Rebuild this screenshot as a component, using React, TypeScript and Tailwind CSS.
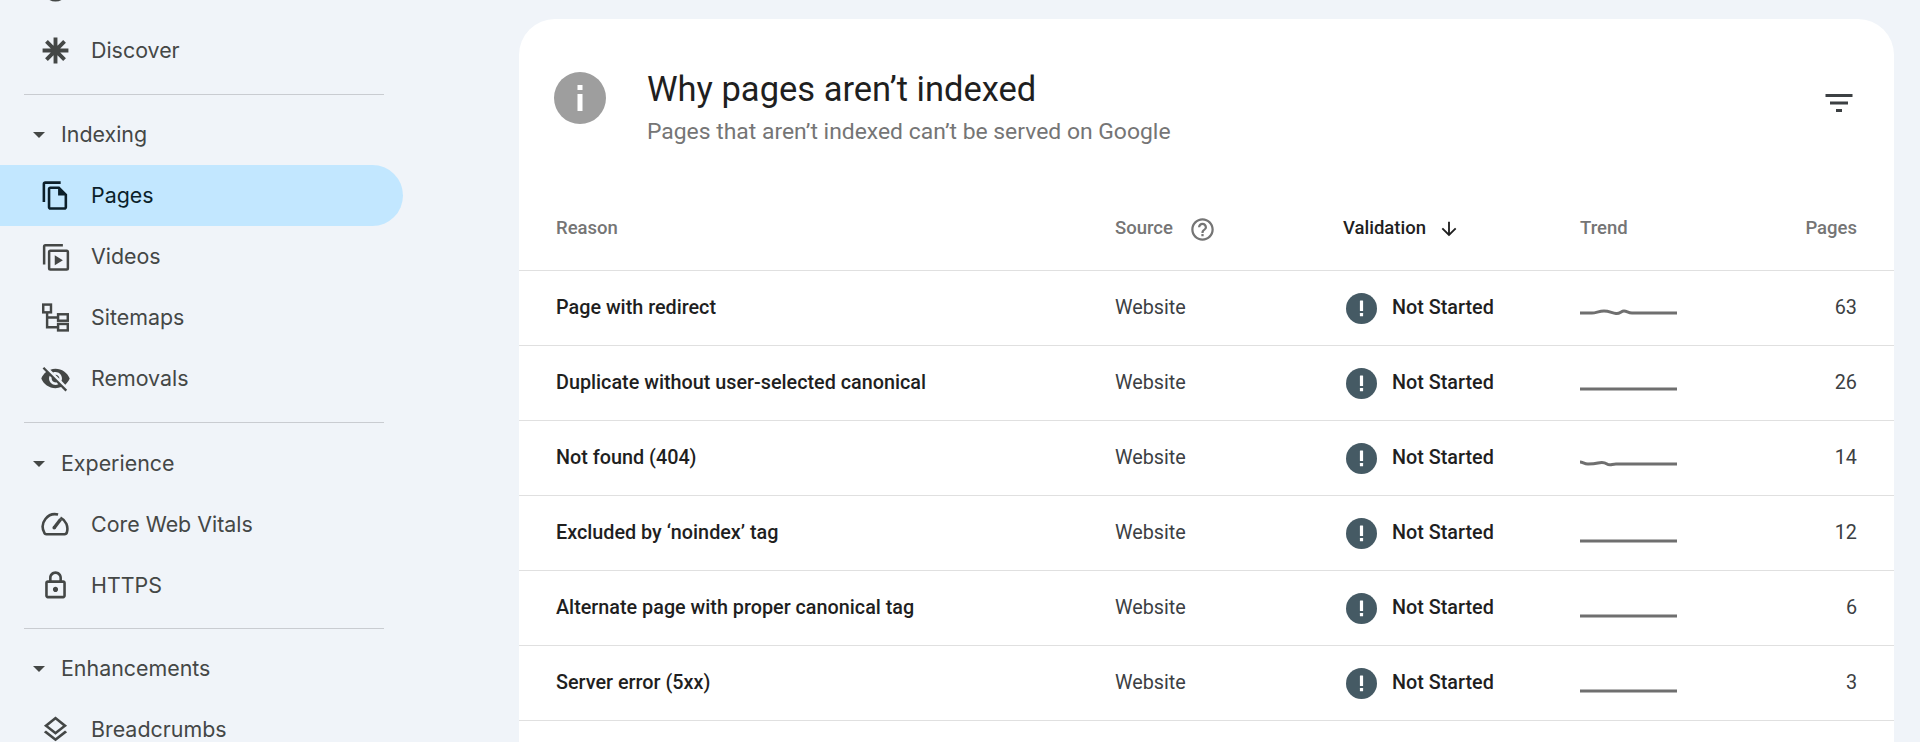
import type { ReactNode } from 'react'

const sans = "font-['Roboto',sans-serif]"

function Icon({ d, className = 'w-[31px] h-[31px]' }: { d: string; className?: string }) {
  return (
    <svg viewBox="0 0 24 24" fill="currentColor" className={className}>
      <path d={d} />
    </svg>
  )
}

const paths = {
  pages: 'M16 1H4c-1.1 0-2 .9-2 2v14h2V3h12V1zm-1 4H8c-1.1 0-1.99.9-1.99 2L6 21c0 1.1.89 2 1.99 2H19c1.1 0 2-.9 2-2V11l-6-6zM8 21V7h6v5h5v9H8z',
  removals: 'M12 7c2.76 0 5 2.24 5 5 0 .65-.13 1.26-.36 1.83l2.92 2.92c1.51-1.26 2.7-2.89 3.43-4.75-1.73-4.39-6-7.5-11-7.5-1.4 0-2.74.25-3.98.7l2.16 2.16C10.74 7.13 11.35 7 12 7zM2 4.27l2.28 2.28.46.46C3.08 8.3 1.78 10.02 1 12c1.73 4.39 6 7.5 11 7.5 1.55 0 3.03-.3 4.38-.84l.42.42L19.73 22 21 20.73 3.27 3 2 4.27zM7.53 9.8l1.55 1.55c-.05.21-.08.43-.08.65 0 1.66 1.34 3 3 3 .22 0 .44-.03.65-.08l1.55 1.55c-.67.33-1.41.53-2.2.53-2.76 0-5-2.24-5-5 0-.79.2-1.53.53-2.2zm4.31-.78l3.15 3.15.02-.16c0-1.66-1.34-3-3-3l-.17.01z',
  lock: 'M18 8h-1V6c0-2.76-2.24-5-5-5S7 3.24 7 6v2H6c-1.1 0-2 .9-2 2v10c0 1.1.9 2 2 2h12c1.1 0 2-.9 2-2V10c0-1.1-.9-2-2-2zM9 6c0-1.66 1.34-3 3-3s3 1.34 3 3v2H9V6zm9 14H6V10h12v10zm-6-3c1.1 0 2-.9 2-2s-.9-2-2-2-2 .9-2 2 .9 2 2 2z',
  layers: 'M11.99 18.54l-7.37-5.73L3 14.07l9 7 9-7-1.63-1.27-7.38 5.74zM12 16l7.36-5.73L21 9l-9-7-9 7 1.63 1.27L12 16zm0-11.47L17.74 9 12 13.47 6.26 9 12 4.53z',
  filter: 'M10 18h4v-2h-4v2zM3 6v2h18V6H3zm3 7h12v-2H6v2z',
  arrow: 'M20 12l-1.41-1.41L13 16.17V4h-2v12.17l-5.58-5.59L4 12l8 8 8-8z',
  help: 'M11 18h2v-2h-2v2zm1-16C6.48 2 2 6.48 2 12s4.48 10 10 10 10-4.48 10-10S17.52 2 12 2zm0 18c-4.41 0-8-3.59-8-8s3.59-8 8-8 8 3.59 8 8-3.59 8-8 8zm0-14c-2.21 0-4 1.79-4 4h2c0-1.1.9-2 2-2s2 .9 2 2c0 2-3 1.75-3 5h2c0-2.25 3-2.5 3-5 0-2.21-1.79-4-4-4z',
}

function AsteriskIcon() {
  return (
    <svg viewBox="0 0 24 24" className="w-[31px] h-[31px]" stroke="currentColor" strokeWidth="3" fill="none">
      <path d="M12 2v20M2 12h20M5 5l14 14M5 19L19 5" />
    </svg>
  )
}

function VideosIcon() {
  return (
    <svg viewBox="0 0 24 24" className="w-[30px] h-[30px]" fill="none" stroke="currentColor" strokeWidth="2">
      <path d="M17.5 2.5H3.5a1 1 0 0 0-1 1V18" />
      <rect x="6.5" y="7" width="15" height="15" rx="1" />
      <path d="M11 10.5v8l6.5-4z" fill="currentColor" stroke="none" />
    </svg>
  )
}

function SitemapIcon() {
  return (
    <svg viewBox="0 0 24 24" className="w-[31px] h-[31px]" stroke="currentColor" strokeWidth="1.9" fill="none">
      <rect x="2.5" y="2" width="6" height="6" />
      <rect x="14" y="9.5" width="7.5" height="5" />
      <rect x="14" y="17" width="7.5" height="5" />
      <path d="M5.5 8v11.5H14M5.5 12h8.5" />
    </svg>
  )
}

function GaugeIcon() {
  return (
    <svg viewBox="0 0 24 24" className="w-[31px] h-[31px]" stroke="currentColor" strokeWidth="2" fill="none">
      <path d="M5 19.5h14c1 0 1.6-.6 1.8-1.4a9.6 9.6 0 0 0-5-11.4M14 4.3A9.6 9.6 0 0 0 3.2 18c.2.9.8 1.5 1.8 1.5" />
      <path d="M11 14.5l5-6.5" strokeWidth="2.6" />
      <circle cx="11" cy="14.5" r="1.4" fill="currentColor" stroke="none" />
    </svg>
  )
}

function Item({ icon, label, active }: { icon: ReactNode; label: string; active?: boolean }) {
  return (
    <div
      className={`flex h-[61px] w-[403px] items-center gap-[20px] rounded-r-full pl-[40px] text-[21.4px] ${
        active ? 'bg-[#c2e7ff] text-[#0b1f2a]' : 'text-[#444746]'
      }`}
    >
      <span className="flex w-[31px] justify-center">{icon}</span>
      <span>{label}</span>
    </div>
  )
}

function Section({ label }: { label: string }) {
  return (
    <div className="flex h-[61px] items-center gap-[16px] pl-[33px] text-[21.4px] text-[#444746]">
      <span className="h-0 w-0 border-x-[6.5px] border-t-[6.5px] border-x-transparent border-t-[#444746]" />
      <span>{label}</span>
    </div>
  )
}

function Divider() {
  return <div className="mx-[24px] w-[360px] border-t border-[#c9ccd1]" />
}

function Sidebar() {
  return (
    <aside className={`w-[519px] shrink-0 font-['Inter',sans-serif]`}>
      <div className="-mt-[41px]">
        <Item
          label=""
          icon={
            <svg viewBox="0 0 24 24" className="w-[29px] h-[29px]" fill="none" stroke="#444746" strokeWidth="3">
              <circle cx="12" cy="12" r="8.5" />
            </svg>
          }
        />
        <Item label="Discover" icon={<AsteriskIcon />} />
      </div>
      <div className="mt-[13px]">
        <Divider />
      </div>
      <div className="mt-[9px]">
        <Section label="Indexing" />
      </div>
      <Item active label="Pages" icon={<Icon d={paths.pages} />} />
      <Item label="Videos" icon={<VideosIcon />} />
      <Item label="Sitemaps" icon={<SitemapIcon />} />
      <Item label="Removals" icon={<Icon d={paths.removals} />} />
      <div className="mt-[13px]">
        <Divider />
      </div>
      <div className="mt-[10px]">
        <Section label="Experience" />
      </div>
      <Item label="Core Web Vitals" icon={<GaugeIcon />} />
      <Item label="HTTPS" icon={<Icon d={paths.lock} className="h-[33px] w-[33px]" />} />
      <div className="mt-[12px]">
        <Divider />
      </div>
      <div className="mt-[9px]">
        <Section label="Enhancements" />
      </div>
      <Item label="Breadcrumbs" icon={<Icon d={paths.layers} />} />
    </aside>
  )
}

function NotStartedIcon() {
  return (
    <svg viewBox="0 0 31 31" className="h-[31px] w-[31px] shrink-0">
      <circle cx="15.5" cy="15.5" r="15.5" fill="#455a64" />
      <rect x="13.9" y="7.5" width="3.2" height="10.5" rx="0.5" fill="#fff" />
      <rect x="13.9" y="20" width="3.2" height="3.2" rx="0.5" fill="#fff" />
    </svg>
  )
}

function Trend({ d, y }: { d?: string; y: number }) {
  return (
    <svg viewBox="0 0 97 30" className="h-[30px] w-[97px] translate-y-[1px]" fill="none" stroke="#6f6f6f" strokeWidth="3">
      <path d={d ?? `M0 ${y}H97`} />
    </svg>
  )
}

const rows = [
  { reason: 'Page with redirect', pages: 63, d: 'M0 19H12C16 19 19 17 24 17S32 19 36 19.5 41 17 44 17 48 19 52 19H97' },
  { reason: 'Duplicate without user-selected canonical', pages: 26, y: 20 },
  { reason: 'Not found (404)', pages: 14, d: 'M0 18C3 18 4 20 8 20S14 20 18 19 24 18 27 20 32 20 36 20H97' },
  { reason: 'Excluded by ‘noindex’ tag', pages: 12, y: 22 },
  { reason: 'Alternate page with proper canonical tag', pages: 6, y: 22 },
  { reason: 'Server error (5xx)', pages: 3, y: 22 },
]

const grid = 'grid grid-cols-[559px_228px_237px_97px_1fr] items-center px-[37px]'

function Card() {
  return (
    <main className={`mt-[19px] flex-1 mr-[26px] rounded-t-[36px] bg-white ${sans}`}>
      <header className="flex h-[172px] px-[35px]">
        <svg viewBox="0 0 52 52" className="mt-[53px] h-[52px] w-[52px] shrink-0">
          <circle cx="26" cy="26" r="26" fill="#9e9e9e" />
          <rect x="23.5" y="22" width="5" height="17" fill="#fff" />
          <rect x="23.5" y="13" width="5" height="5" fill="#fff" />
        </svg>
        <div className="ml-[41px] mt-[47px]">
          <h1 className="text-[34.5px] leading-[46px] text-[#1f1f1f]">Why pages aren’t indexed</h1>
          <p className="mt-[5px] text-[22.9px] leading-[30px] text-[#757575]">
            Pages that aren’t indexed can’t be served on Google
          </p>
        </div>
        <div className="ml-auto mr-[2px] mt-[66px] text-[#3c4043]">
          <Icon d={paths.filter} className="h-[36px] w-[36px]" />
        </div>
      </header>

      <div className={`${grid} h-[80px] border-b border-[#e0e0e0] pb-[3px] text-[18.5px] font-medium text-[#757575]`}>
        <span>Reason</span>
        <span className="flex items-center gap-[16px]">
          Source
          <Icon d={paths.help} className="h-[27px] w-[27px]" />
        </span>
        <span className="flex items-center gap-[12px] text-[#1f1f1f]">
          Validation
          <Icon d={paths.arrow} className="h-[22px] w-[22px]" />
        </span>
        <span>Trend</span>
        <span className="text-right">Pages</span>
      </div>

      {rows.map(row => (
        <div key={row.reason} className={`${grid} h-[75px] border-b border-[#e0e0e0] text-[19.8px] text-[#1f1f1f]`}>
          <span className="font-medium">{row.reason}</span>
          <span className="text-[#3c4043]">Website</span>
          <span className="flex items-center gap-[15px] pl-[3px] font-medium">
            <NotStartedIcon />
            Not Started
          </span>
          <Trend d={row.d} y={row.y ?? 20} />
          <span className="text-right text-[#3c4043]">{row.pages}</span>
        </div>
      ))}

      <div className={`${grid} h-[75px]`}>
        <span />
        <span />
        <span className="pl-[3px]">
          <NotStartedIcon />
        </span>
      </div>
    </main>
  )
}

export default function App() {
  return (
    <div className="flex h-[742px] w-[1920px] overflow-hidden bg-[#f0f4f9]">
      <Sidebar />
      <Card />
    </div>
  )
}
